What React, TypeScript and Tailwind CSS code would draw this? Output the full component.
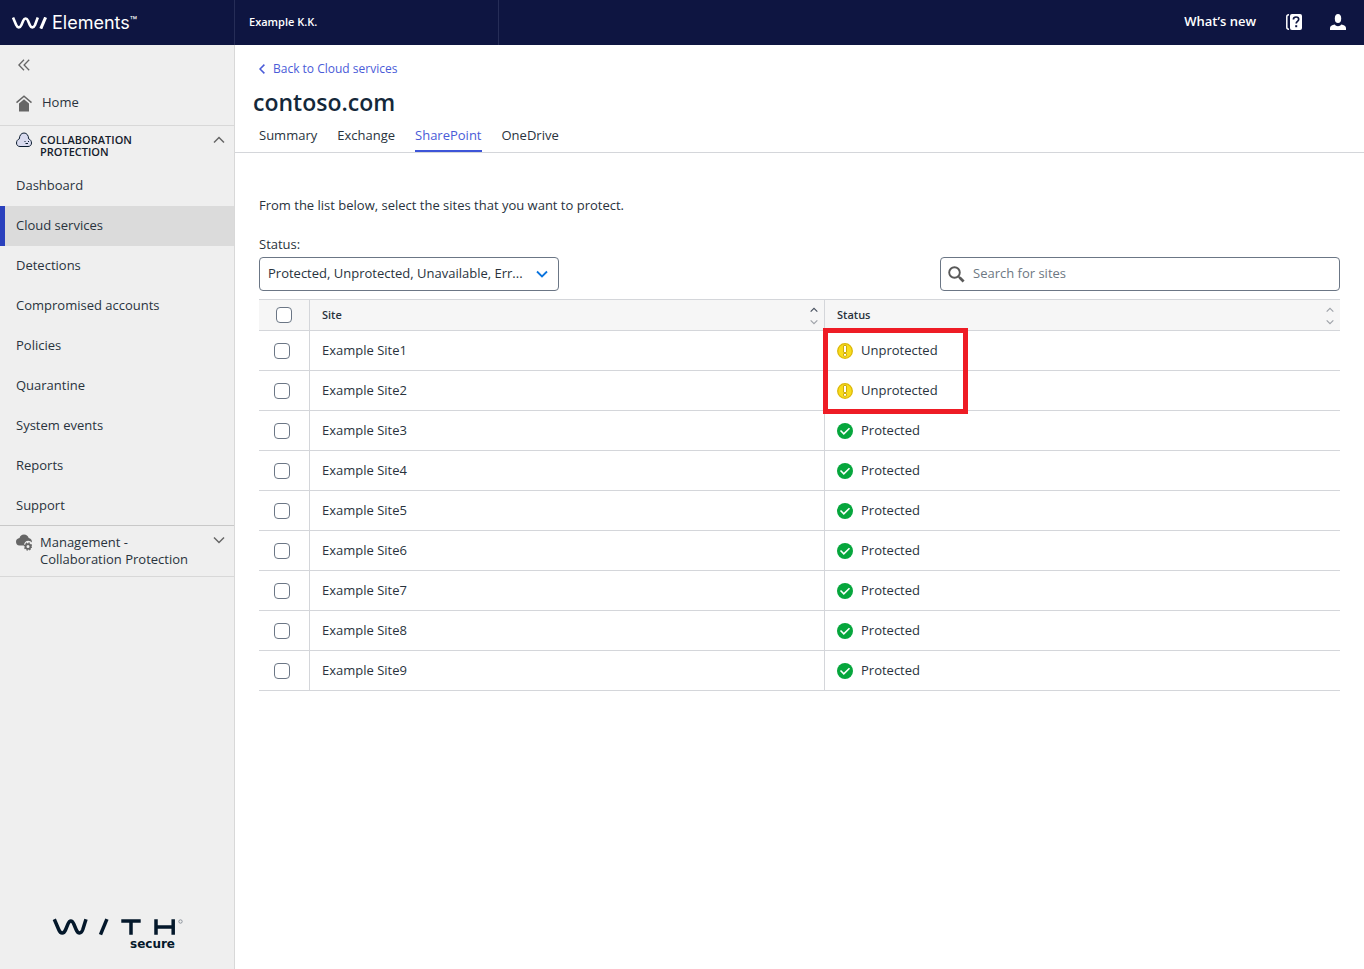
import React, { useState } from "react";

const navItems = [
  "Dashboard",
  "Cloud services",
  "Detections",
  "Compromised accounts",
  "Policies",
  "Quarantine",
  "System events",
  "Reports",
  "Support",
];

const tabs = ["Summary", "Exchange", "SharePoint", "OneDrive"];

const sites = [1, 2, 3, 4, 5, 6, 7, 8, 9].map((n) => ({
  name: `Example Site${n}`,
  isProtected: n > 2,
}));

function Chevron({ d, className, width = 1.5 }: { d: string; className: string; width?: number }) {
  return (
    <svg viewBox="0 0 12 12" className={className} fill="none" stroke="currentColor" strokeWidth={width} aria-hidden="true">
      <path d={d} />
    </svg>
  );
}

const UP = "M1 8.5 6 3.5l5 5";
const DOWN = "M1 3.5l5 5 5-5";

function ElementsMark() {
  return (
    <svg width="36" height="12" viewBox="0 0 36 12" fill="none" stroke="#fff" strokeWidth="2.6" aria-hidden="true">
      <path d="M1 .5 4.200 8C5 9.800 5.600 10.400 6.800 10.400S8.700 9.600 9.400 8l1.800-4.300C11.900 2.100 12.500 1.500 13.600 1.500s1.700.6 2.400 2.200L17.800 8c.7 1.700 1.300 2.400 2.500 2.400S22.200 9.800 23 8L25.800.5" />
      <path d="M28.800 11.700 33.600.3" strokeWidth="3" />
    </svg>
  );
}

function HomeIcon() {
  return (
    <svg width="16" height="17" viewBox="0 0 16 17" aria-hidden="true">
      <path d="M.5 7.600 8 1.200l7.500 6.400" fill="none" stroke="#666" strokeWidth="1.500" />
      <path d="M8 4.200l5 4.200V16.500H3V8.400z" fill="#666" />
    </svg>
  );
}

function CloudFaceIcon() {
  return (
    <svg width="16" height="16" viewBox="0 0 16 16" fill="none" stroke="#0b1c30" aria-hidden="true">
      <path d="M4 14.500h8c2.200 0 3.500-1.500 3.500-3.500 0-1.900-1.100-3.600-2.900-4.200C12.600 3.500 10.800 1 8 1S3.400 3.500 3.400 6.800C1.600 7.400.5 9.100.5 11c0 2 1.300 3.500 3.500 3.500z" fill="#dadcf0" />
      <path d="M8.500 9.500h1M12 9.500h1M9.500 11.500H12" />
    </svg>
  );
}

function CloudGearIcon() {
  return (
    <svg width="16" height="17" viewBox="0 0 16 17" aria-hidden="true">
      <path d="M3.400 11.500H8c0-3 2-4.700 4.200-4.700 1.500 0 2.800.7 3.600 1.800.5-2.400-.9-4.200-3.100-4.500C12 1.900 10.300.5 8 .5S4.100 1.900 3.500 4C1.400 4.200 0 5.700 0 7.700c0 2.200 1.400 3.800 3.400 3.800z" fill="#666" />
      <circle cx="12" cy="12.500" r="2.400" fill="none" stroke="#666" strokeWidth="1.800" />
      <circle cx="12" cy="12.500" r="3.500" fill="none" stroke="#666" strokeWidth="1.400" strokeDasharray="1.400 1.350" />
    </svg>
  );
}

function HelpIcon() {
  return (
    <svg width="16" height="16" viewBox="0 0 16 16" aria-hidden="true">
      <path d="M3 .8C1.500.8.800 1.400.800 2.800v10.400c0 1.400.7 2 2.200 2" fill="none" stroke="#fff" strokeWidth="1.500" />
      <rect x="4" y="0" width="12" height="16" rx="2" fill="#fff" />
      <path d="M7.400 5.500c0-1.500 1-2.500 2.600-2.500s2.700.9 2.700 2.300c0 2.100-2.500 2-2.500 4.200" fill="none" stroke="#0e1541" strokeWidth="1.700" />
      <path d="M9.200 11.200h2v2h-2z" fill="#0e1541" />
    </svg>
  );
}

function UserIcon() {
  return (
    <svg width="16" height="16" viewBox="0 0 16 16" fill="#fff" aria-hidden="true">
      <ellipse cx="8" cy="4.500" rx="3.200" ry="4.500" />
      <path d="M0 16v-2c0-1.800 1.800-2.800 4.800-3.400C5.500 11.600 6.500 12.200 8 12.200s2.500-.6 3.200-1.600c3 .6 4.800 1.600 4.800 3.400v2z" />
    </svg>
  );
}

function WarningIcon() {
  return (
    <svg width="16" height="16" viewBox="0 0 16 16" aria-hidden="true">
      <circle cx="8" cy="8" r="7.300" fill="#f8dc1c" stroke="#dcb80a" strokeWidth="1.300" />
      <rect x="6.500" y="2.500" width="3" height="7" rx=".5" fill="#fff" stroke="#c9a400" strokeWidth=".9" />
      <rect x="6.500" y="10.500" width="3" height="2.700" rx=".5" fill="#fff" stroke="#c9a400" strokeWidth=".9" />
    </svg>
  );
}

function CheckIcon() {
  return (
    <svg width="16" height="16" viewBox="0 0 16 16" aria-hidden="true">
      <circle cx="8" cy="8" r="8" fill="#06a63c" />
      <path d="M3.500 7.500l3.300 3.300 5.700-5.600" fill="none" stroke="#fff" strokeWidth="1.600" />
    </svg>
  );
}

function WithSecureLogo() {
  return (
    <svg width="132" height="34" viewBox="0 0 132 34" role="img" aria-label="WITH secure">
      <g fill="none" stroke="#04182b" strokeWidth="3.500">
        <path d="M2.300 2.200 6.700 12.500C7.700 15 8.500 16 10.200 16s2.500-1 3.500-3.500l2.200-5.300C16.800 5 17.500 4 18.900 4s2 .9 3 3.200l2.200 5.300c1 2.500 1.800 3.500 3.500 3.500s2.300-1 3.200-3.500L34 2.200" />
        <path d="M48.500 17.700 54.900 2.200" />
        <path d="M69.300 4h19.400M79 4v13.700" />
        <path d="M104 2.200v15.500M121.200 2.200v15.500M104 10h17.200" />
      </g>
      <circle cx="128.500" cy="4.500" r="1.700" fill="none" stroke="#7a828c" strokeWidth=".8" />
      <text x="123" y="31" textAnchor="end" fontSize="12" fontWeight="700" fontFamily="DejaVu Sans, sans-serif" fill="#04182b">
        secure
      </text>
    </svg>
  );
}

function SortArrows({ active = false }: { active?: boolean }) {
  return (
    <span className="flex flex-col gap-1 pt-[2px]">
      <Chevron d={UP} className={active ? "size-2 text-[#4a5361]" : "size-2 text-[#a0a4aa]"} width={1.8} />
      <Chevron d={DOWN} className="size-2 text-[#a0a4aa]" width={1.8} />
    </span>
  );
}

const boxClass =
  "block size-4 appearance-none rounded border border-[#6b7685] bg-white checked:bg-[#3d55d8]";

export default function App() {
  const [checked, setChecked] = useState<string[]>([]);
  const toggle = (name: string) =>
    setChecked((c) => (c.includes(name) ? c.filter((n) => n !== name) : [...c, name]));

  return (
    <div className="flex min-h-screen flex-col bg-white font-['Open_Sans','Noto_Sans',sans-serif] text-[13px] text-[#29333d]">
      <header className="flex h-[45px] items-center bg-[#0e1541] text-white">
        <a href="#home" className="flex h-full w-[235px] shrink-0 items-center gap-1 border-r border-[#262d57] pl-3 font-['Inter',sans-serif]">
          <ElementsMark />
          <span className="flex items-start text-lg leading-5">
            Elements<span className="text-[12px] leading-4">™</span>
          </span>
        </a>
        <div className="flex h-full w-[264px] items-center border-r border-[#262d57] pl-[14px] text-[11px] font-semibold">
          Example K.K.
        </div>
        <nav className="ml-auto flex items-center pr-[18px] pb-[2px]">
          <a href="#new" className="mr-[30px] pb-[2px] leading-5 font-semibold">What’s new</a>
          <button type="button" aria-label="Help" className="mr-7"><HelpIcon /></button>
          <button type="button" aria-label="Account"><UserIcon /></button>
        </nav>
      </header>

      <div className="flex flex-1">
        <aside className="flex w-[235px] shrink-0 flex-col border-r border-[#d8d8d8] bg-[#efefef]">
          <button type="button" aria-label="Collapse menu" className="flex h-10 items-center pl-[18px] text-[#666]">
            <svg width="12" height="12" viewBox="0 0 12 12" fill="none" stroke="currentColor" strokeWidth="1.3" aria-hidden="true">
              <path d="M6 .8.9 6 6 11.200M11.200.8 6.100 6l5.100 5.200" />
            </svg>
          </button>
          <a href="#home" className="flex h-[41px] items-center gap-[10px] border-b border-[#d8d8d8] pb-1 pl-4">
            <HomeIcon />
            Home
          </a>
          <button type="button" className="flex h-10 items-start gap-2 pt-2 pr-[9px] pl-4 text-left">
            <span className="-mt-[2px]"><CloudFaceIcon /></span>
            <span className="flex-1 text-[11px] leading-3 font-semibold text-[#14202c]">
              COLLABORATION
              <br />
              PROTECTION
            </span>
            <Chevron d={UP} className="size-3 text-[#666]" />
          </button>
          <nav className="flex flex-col border-b border-[#c8c8c8]">
            {navItems.map((item) => (
              <a
                key={item}
                href={"#" + item}
                className={
                  item === "Cloud services"
                    ? "flex h-10 items-center border-l-[5px] border-[#2a41bd] bg-[#dbdbdb] pl-[11px]"
                    : "flex h-10 items-center pl-4 last:h-[39px]"
                }
              >
                {item}
              </a>
            ))}
          </nav>
          <button type="button" className="flex items-start gap-2 border-b border-[#d8d8d8] py-2 pr-[9px] pl-4 text-left">
            <CloudGearIcon />
            <span className="flex-1 leading-[17px]">
              Management -
              <br />
              Collaboration Protection
            </span>
            <Chevron d={DOWN} className="size-3 text-[#666]" />
          </button>
          <div className="mt-auto pb-[18px] pl-[52px]">
            <WithSecureLogo />
          </div>
        </aside>

        <main className="min-w-0 flex-1">
          <div className="border-b border-[#d4d6da] px-6 pt-[14px]">
            <a href="#back" className="flex h-5 w-fit items-center gap-2 text-xs text-[#4a5bd8]">
              <svg width="6" height="10" viewBox="0 0 6 10" fill="none" stroke="currentColor" strokeWidth="1.5" aria-hidden="true">
                <path d="M5.400.600 1 5l4.400 4.400" />
              </svg>
              Back to Cloud services
            </a>
            <h1 className="-ml-[6px] pt-2 text-[23px] leading-[30px] font-semibold text-[#14283a]">contoso.com</h1>
            <nav className="flex gap-5 pt-[5px]">
              {tabs.map((t) => (
                <a
                  key={t}
                  href={"#" + t}
                  className={
                    t === "SharePoint"
                      ? "h-[30px] border-b-2 border-[#3d55d8] leading-[26px] text-[#4a5bd8]"
                      : "h-[30px] leading-[26px]"
                  }
                >
                  {t}
                </a>
              ))}
            </nav>
          </div>

          <div className="px-6 pt-[42px]">
            <p className="leading-5">From the list below, select the sites that you want to protect.</p>
            <label htmlFor="status" className="mt-5 block leading-[18px]">Status:</label>
            <div className="mt-1 flex items-center justify-between">
              <div className="relative w-[300px]">
                <select
                  id="status"
                  className="h-[34px] w-full appearance-none truncate rounded border border-[#6b7685] bg-white pr-7 pl-2"
                >
                  <option>Protected, Unprotected, Unavailable, Err...</option>
                </select>
                <Chevron d={DOWN} className="pointer-events-none absolute top-[11px] right-[11px] size-3 text-[#0b74de]" width={1.8} />
              </div>
              <label className="flex h-[34px] w-[400px] items-center gap-2 rounded border border-[#6b7685] bg-white pl-[7px]">
                <svg width="17" height="17" viewBox="0 0 17 17" fill="none" stroke="#595959" aria-hidden="true">
                  <circle cx="6.500" cy="6.500" r="5.300" strokeWidth="1.9" />
                  <path d="M10.300 10.300l2 2" strokeWidth="1.8" />
                  <path d="M11.600 11.600l4 4" strokeWidth="2.8" />
                </svg>
                <input
                  type="search"
                  aria-label="Search for sites"
                  placeholder="Search for sites"
                  className="min-w-0 flex-1 bg-transparent outline-none placeholder:text-[#6d7883]"
                />
              </label>
            </div>

            <table className="mt-2 w-full table-fixed border-separate border-spacing-0">
              <thead>
                <tr className="h-8 bg-[#f6f6f6] text-left text-[11px] leading-4">
                  <th className="w-[51px] border-y border-r border-[#d4d6da] pl-[17px]">
                    <input
                      type="checkbox"
                      aria-label="Select all sites"
                      className={boxClass}
                      checked={checked.length === sites.length}
                      onChange={() => setChecked(checked.length === sites.length ? [] : sites.map((s) => s.name))}
                    />
                  </th>
                  <th className="border-y border-r border-[#d4d6da] pr-[6px] pl-3 font-semibold">
                    <span className="flex items-center justify-between">Site<SortArrows active /></span>
                  </th>
                  <th className="border-y border-[#d4d6da] pr-[6px] pl-3 font-semibold">
                    <span className="flex items-center justify-between">Status<SortArrows /></span>
                  </th>
                </tr>
              </thead>
              <tbody>
                {sites.map((s, i) => (
                  <tr key={s.name} className="h-10">
                    <td className="border-r border-b border-[#d4d6da] pl-[15px]">
                      <input
                        type="checkbox"
                        aria-label={s.name}
                        className={boxClass}
                        checked={checked.includes(s.name)}
                        onChange={() => toggle(s.name)}
                      />
                    </td>
                    <td className="border-r border-b border-[#d4d6da] pl-3">{s.name}</td>
                    <td className="relative border-b border-[#d4d6da] pl-3">
                      <span className="flex items-center gap-2">
                        {s.isProtected ? <CheckIcon /> : <WarningIcon />}
                        {s.isProtected ? "Protected" : "Unprotected"}
                      </span>
                      {i === 0 && (
                        <div className="pointer-events-none absolute -top-[3px] -left-[2px] z-10 h-[86px] w-[145px] border-[5px] border-[#ee1c25]" />
                      )}
                    </td>
                  </tr>
                ))}
              </tbody>
            </table>
          </div>
        </main>
      </div>
    </div>
  );
}
